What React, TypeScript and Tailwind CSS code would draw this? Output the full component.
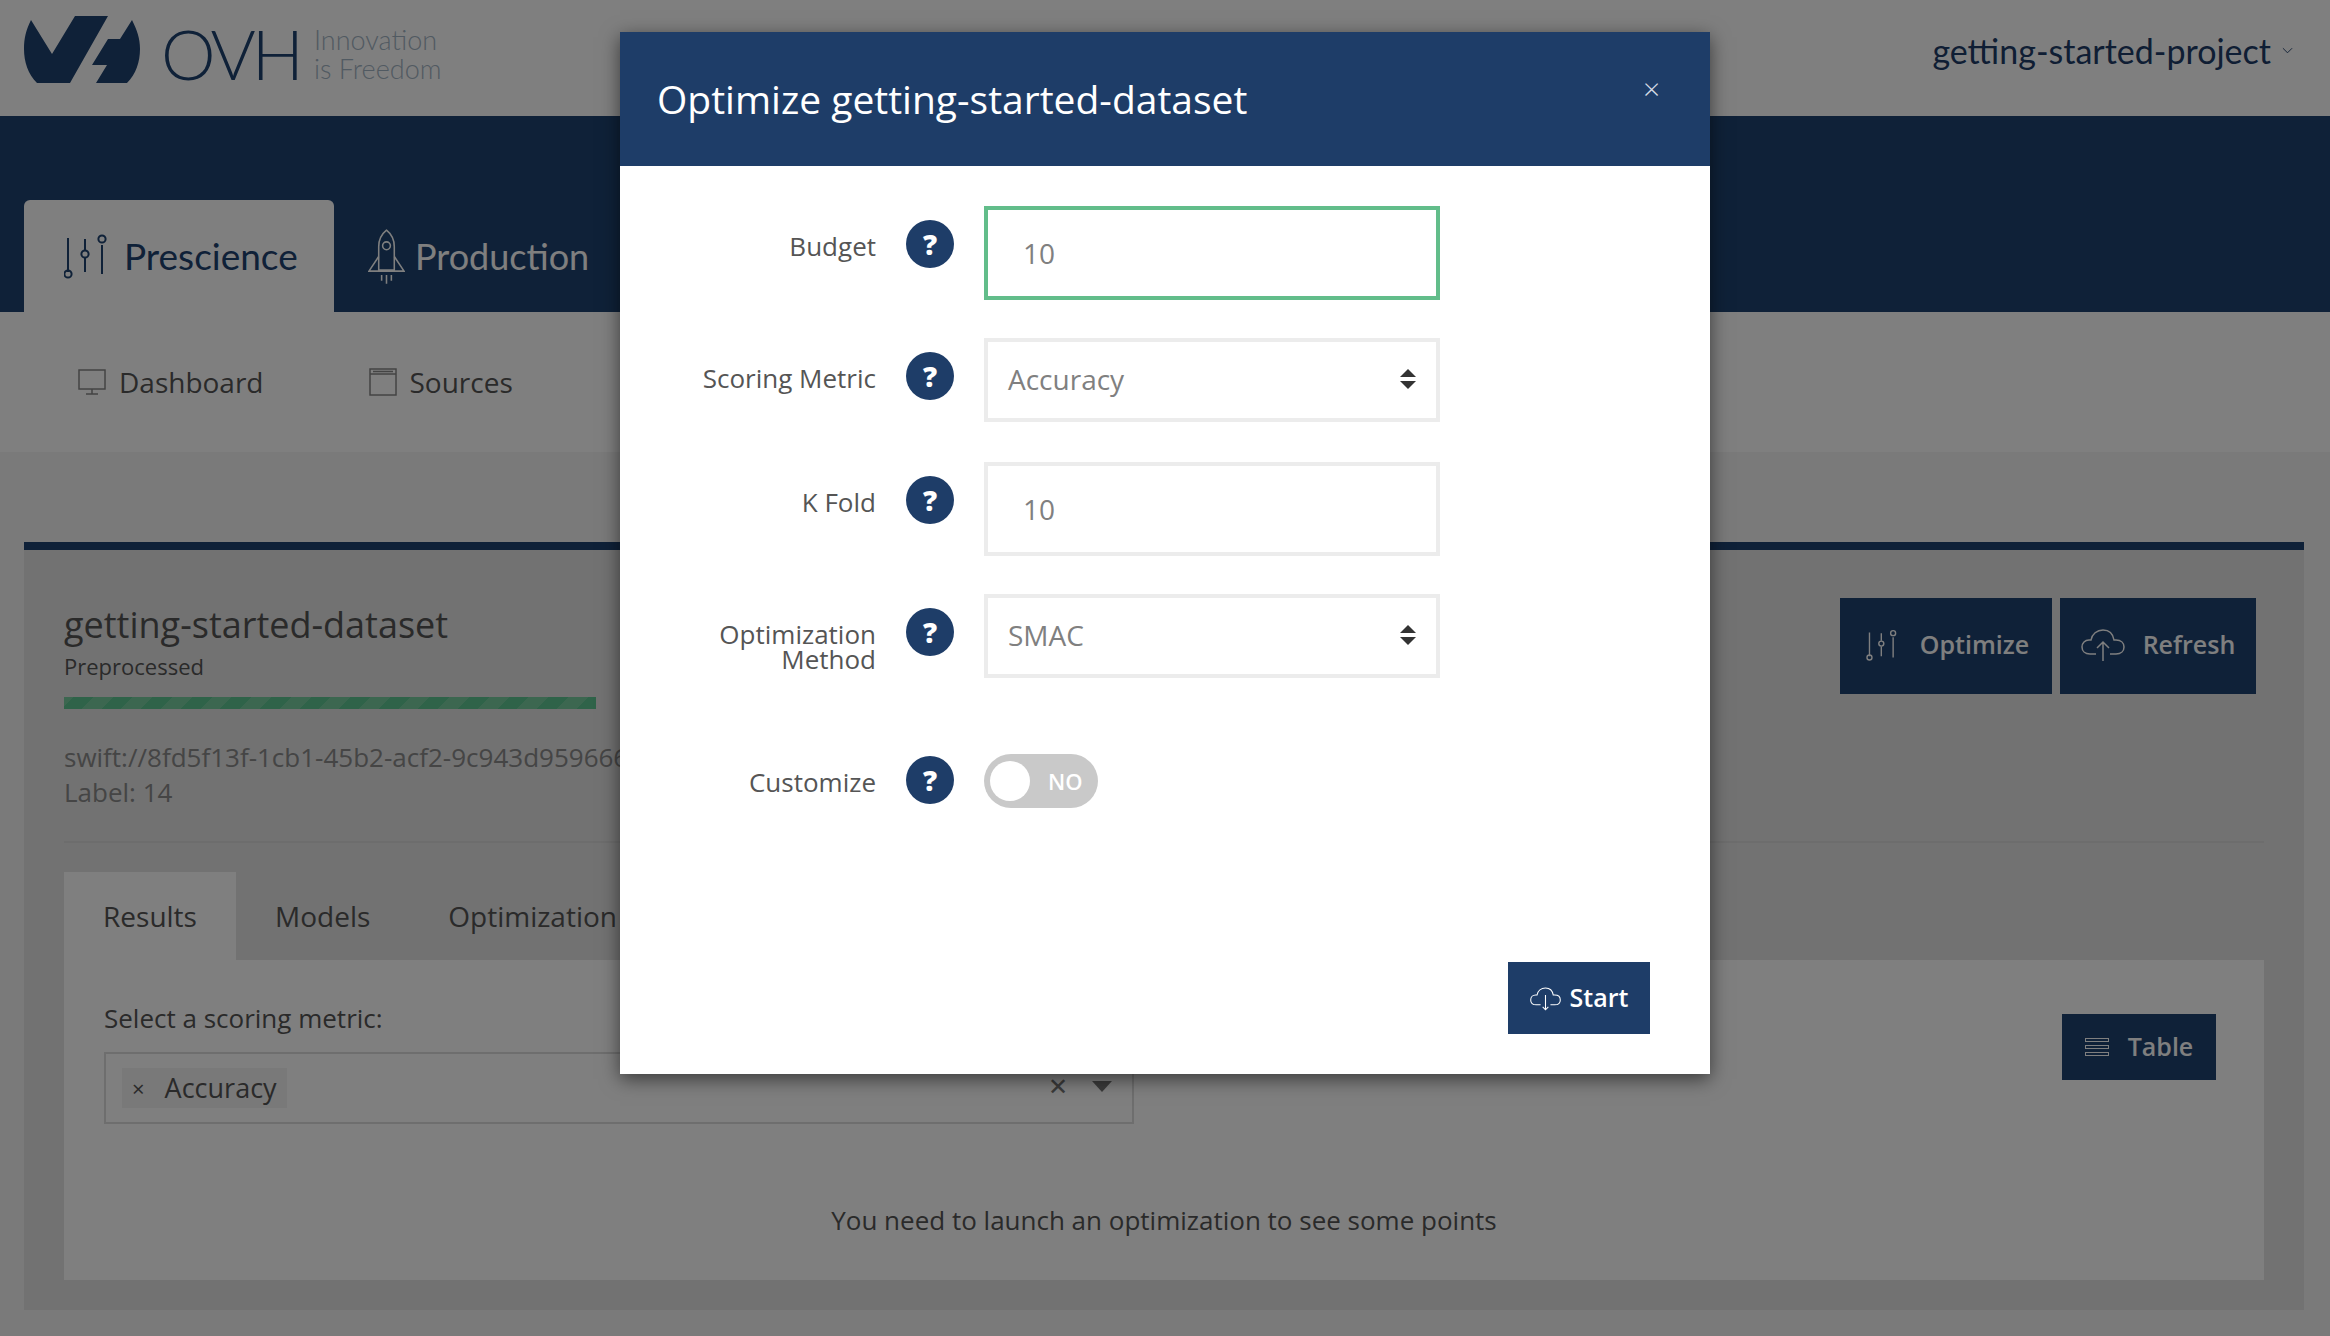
function SlidersIcon({ className }: { className?: string }) {
  return (
    <svg viewBox="0 0 44 46" fill="none" stroke="currentColor" strokeWidth="2" className={className}>
      <path d="M4 5v34M21 6v11M21 25v14M38 12v29" />
      <circle cx="4" cy="41" r="3.6" />
      <circle cx="21" cy="21" r="3.6" />
      <circle cx="38" cy="6" r="3.6" />
    </svg>
  );
}

function RocketIcon({ className }: { className?: string }) {
  return (
    <svg viewBox="0 0 38 56" fill="none" stroke="currentColor" strokeWidth="1.6" className={className}>
      <path d="M19 1c5 4 8 10 8 17v24H11V18c0-7 3-13 8-17z" />
      <circle cx="19" cy="17" r="4" />
      <path d="M11 28L1 43h36L27 28M14 47v6M19 47v9M24 47v6" />
    </svg>
  );
}

function MonitorIcon({ className }: { className?: string }) {
  return (
    <svg viewBox="0 0 28 26" fill="none" stroke="currentColor" strokeWidth="1.5" className={className}>
      <rect x="1" y="1" width="26" height="19" />
      <path d="M14 20v5M8 25h12" />
    </svg>
  );
}

function WindowIcon({ className }: { className?: string }) {
  return (
    <svg viewBox="0 0 28 28" fill="none" stroke="currentColor" strokeWidth="1.5" className={className}>
      <rect x="1" y="1" width="26" height="26" />
      <path d="M1 6h26M4 3.5h20" />
    </svg>
  );
}

function CloudIcon({ down, className }: { down?: boolean; className?: string }) {
  return (
    <svg viewBox="0 0 44 34" fill="none" stroke="currentColor" strokeWidth="1.5" className={className}>
      <path d="M15 26H9C4 26 1 23 1 19c0-4 3-7 7-7h2c1-6 6-10 12-10 6 0 10 4 11 10h2c5 0 8 3 8 7 0 4-3 7-8 7h-6" />
      {down ? (
        <path d="M22 12v21M18 29l4 4 4-4" />
      ) : (
        <path d="M22 33V14M16 20l6-6 6 6" />
      )}
    </svg>
  );
}

function SortArrows() {
  return (
    <svg viewBox="0 0 16 20" className="w-4 h-5 text-[#333]" fill="currentColor">
      <path d="M8 0l8 8H0zM0 12h16l-8 8z" />
    </svg>
  );
}

function Logo() {
  return (
    <div className="flex items-center h-[68px]">
      <svg viewBox="0 0 116 68" className="w-[116px] h-[68px] text-[#1e4270]" fill="currentColor">
        <path d="M7 4C2 14 0 22 0 33c0 13 4 25 13 34h33L84 0H51L28 38z" />
        <path d="M108 4c5 10 8 18 8 29 0 13-4 25-13 34H72l11-18H68l16-26h12z" />
      </svg>
      <span className="ml-[21px] mt-2 w-[140px] font-['Lato'] font-light text-[69px] leading-[60px] tracking-[-4px] text-[#1e4270]">
        OVH
      </span>
      <span className="ml-[13px] mt-[8px] font-['Lato'] font-light text-[27px] leading-[29px] text-[#a3b4c4]">
        Innovation
        <br />
        is Freedom
      </span>
    </div>
  );
}

function Help({ className = "" }: { className?: string }) {
  return (
    <span
      className={`flex items-center justify-center shrink-0 w-12 h-12 rounded-full bg-[#1e3d68] text-white text-[28px] font-extrabold ${className}`}
    >
      ?
    </span>
  );
}

function Row({
  label,
  labelClass = "pt-[28px]",
  helpClass = "mt-[14px]",
  className = "",
  children,
}: {
  label: React.ReactNode;
  labelClass?: string;
  helpClass?: string;
  className?: string;
  children: React.ReactNode;
}) {
  return (
    <div className={`flex items-start ${className}`}>
      <label className={`w-[256px] text-right text-[26px] leading-[25px] text-[#555] ${labelClass}`}>
        {label}
      </label>
      <Help className={`ml-[30px] mr-[30px] ${helpClass}`} />
      {children}
    </div>
  );
}

function OptimizeModal() {
  return (
    <div className="absolute left-[620px] top-[32px] w-[1090px] h-[1042px] flex flex-col bg-white shadow-[0_5px_18px_rgba(0,0,0,0.55)]">
      <div className="relative flex items-center h-[134px] px-[37px] bg-[#1e3d68] text-white">
        <h2 className="text-[39px] font-normal">Optimize getting-started-dataset</h2>
        <span className="absolute right-[50px] top-[42px] text-[30px] leading-none font-light text-[#d5dce6]">×</span>
      </div>

      <div className="pt-10">
        <Row label="Budget">
          <input
            readOnly
            value="10"
            className="w-[456px] h-[94px] border-4 border-[#62bd8a] pl-[35px] text-[28px] text-[#808080] outline-none"
          />
        </Row>
        <Row label="Scoring Metric" className="mt-[38px]">
          <div className="flex items-center justify-between w-[456px] h-[84px] border-4 border-[#ececec] pl-5 pr-5 pb-[2px] text-[28px] text-[#808080]">
            Accuracy
            <SortArrows />
          </div>
        </Row>
        <Row label="K Fold" className="mt-[40px]">
          <input
            readOnly
            value="10"
            className="w-[456px] h-[94px] border-4 border-[#ececec] pl-[35px] text-[28px] text-[#808080] outline-none"
          />
        </Row>
        <Row
          label={
            <>
              Optimization
              <br />
              Method
            </>
          }
          className="mt-[38px]"
        >
          <div className="flex items-center justify-between w-[456px] h-[84px] border-4 border-[#ececec] pl-5 pr-5 pb-[2px] text-[28px] text-[#808080]">
            SMAC
            <SortArrows />
          </div>
        </Row>
        <Row label="Customize" className="mt-[76px]" labelClass="pt-[16px]" helpClass="mt-[2px]">
          <div className="flex items-center w-[114px] h-[54px] rounded-full bg-[#c9c9c9] pl-[6px]">
            <span className="w-10 h-10 rounded-full bg-white" />
            <span className="ml-[18px] text-[22px] font-semibold text-white">NO</span>
          </div>
        </Row>
      </div>

      <div className="mt-auto flex justify-end pr-[60px] pb-10">
        <button className="flex items-center justify-center gap-[9px] w-[142px] h-[72px] bg-[#1e3d68] text-white text-[25px] font-semibold">
          <CloudIcon down className="w-[31px] h-[29px]" />
          Start
        </button>
      </div>
    </div>
  );
}

export default function App() {
  return (
    <div className="relative flex flex-col w-[2330px] h-[1336px] overflow-hidden bg-[#f5f5f5] font-['Open_Sans',sans-serif] text-[#555]">
      {/* HEADER */}
      <header className="flex items-center justify-between h-[116px] bg-white pl-6 pr-[37px] pb-4">
        <Logo />
        <div className="flex items-center gap-[11px] font-['Lato'] text-[34px] text-[#1e3d68]">
          getting-started-project
          <svg viewBox="0 0 12 7" className="w-[11px] h-[7px]" fill="none" stroke="currentColor" strokeWidth="1">
            <path d="M1 1l5 5 5-5" />
          </svg>
        </div>
      </header>

      {/* MAIN TABS */}
      <nav className="flex items-end h-[196px] bg-[#1e4270] pl-6">
        <div className="flex items-center w-[310px] h-[112px] pl-10 rounded-t-md bg-white text-[#1e4270]">
          <SlidersIcon className="w-[44px] h-[46px]" />
          <span className="ml-[16px] font-['Lato'] text-[37px]">Prescience</span>
        </div>
        <div className="flex items-center h-[112px] ml-[34px] text-white">
          <RocketIcon className="w-[37px] h-[55px]" />
          <span className="ml-[10px] font-['Lato'] text-[36px]">Production</span>
        </div>
      </nav>

      {/* SUB NAV */}
      <div className="flex items-center h-[140px] bg-white pl-[78px] text-[28px] text-[#555]">
        <MonitorIcon className="w-[28px] h-[26px] text-[#888]" />
        <span className="ml-[13px]">Dashboard</span>
        <WindowIcon className="ml-[105px] w-[28px] h-[28px] text-[#888]" />
        <span className="ml-[13px]">Sources</span>
      </div>

      {/* CONTENT */}
      <main className="flex-1 pt-[90px] pl-6 pr-[26px]">
        <section className="border-t-8 border-[#1e4270] bg-[#e4e4e4] px-10 pb-[30px]">
          <div className="flex justify-between border-b-2 border-[#dadada] h-[293px]">
            <div className="pt-[51px]">
              <h1 className="text-[36px] leading-[48px] text-[#555]">getting-started-dataset</h1>
              <p className="text-[22px] leading-[32px] mt-[1px] text-[#555]">Preprocessed</p>
              <div className="mt-[15px] w-[532px] h-3 bg-[repeating-linear-gradient(-45deg,#5ec692_0,#5ec692_14px,#78cfa0_14px,#78cfa0_28px)]" />
              <p className="mt-[31px] text-[26px] leading-[35px] text-[#8a8a8a]">
                swift://8fd5f13f-1cb1-45b2-acf2-9c943d959666
                <br />
                Label: 14
              </p>
            </div>
            <div className="flex gap-2 mt-[48px] mr-2 h-[96px] text-white text-[25px] font-semibold">
              <button className="flex items-center justify-center gap-[22px] pb-[3px] pl-[3px] w-[212px] bg-[#1e4270]">
                <SlidersIcon className="w-[32px] h-[32px]" />
                Optimize
              </button>
              <button className="flex items-center justify-center gap-[18px] pb-[3px] w-[196px] bg-[#1e4270]">
                <CloudIcon className="w-[44px] h-[34px]" />
                Refresh
              </button>
            </div>
          </div>

          <div className="flex mt-[29px] h-[88px] text-[28px] text-[#555]">
            <div className="flex items-center w-[172px] justify-center bg-white">Results</div>
            <div className="flex items-center ml-[39px]">Models</div>
            <div className="flex items-center ml-[78px]">Optimization</div>
          </div>

          <div className="relative h-[320px] bg-white px-10 pt-[40px]">
            <p className="text-[26px] leading-[36px] text-[#555]">Select a scoring metric:</p>
            <div className="flex items-center justify-between mt-[16px] w-[1030px] h-[72px] border-2 border-[#dcdcdc] pl-4 pr-5">
              <span className="flex items-center gap-[20px] h-10 px-[10px] bg-[#f2f2f2] text-[27px]">
                <span className="text-[22px]">×</span>
                Accuracy
              </span>
              <span className="flex items-center gap-[24px] pb-1 text-[#777]">
                <span className="text-[24px] leading-none">✕</span>
                <span className="w-0 h-0 border-x-[10px] border-t-[11px] border-x-transparent border-t-[#777]" />
              </span>
            </div>
            <p className="mt-[78px] text-center text-[26px] leading-9 text-[#555]">
              You need to launch an optimization to see some points
            </p>
            <button className="absolute right-[48px] top-[54px] flex items-center justify-center gap-[19px] w-[154px] h-[66px] bg-[#1e4270] text-white text-[25px] font-semibold">
              <span className="flex flex-col gap-[3px] w-6">
                <span className="h-[4px] border border-white" />
                <span className="h-[4px] border border-white" />
                <span className="h-[4px] border border-white" />
              </span>
              Table
            </button>
          </div>
        </section>
      </main>

      {/* BACKDROP + MODAL */}
      <div className="absolute inset-0 bg-black/50" />
      <OptimizeModal />
    </div>
  );
}
